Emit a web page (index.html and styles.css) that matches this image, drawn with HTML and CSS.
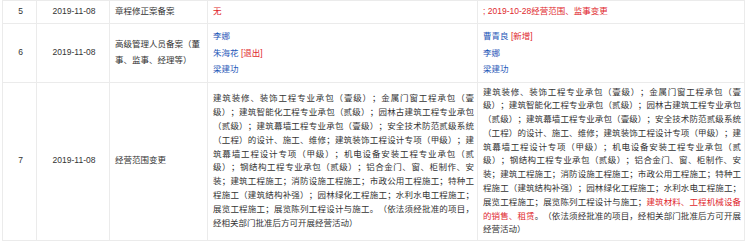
FILE: index.html
```html
<!DOCTYPE html>
<html lang="zh-CN">
<head>
<meta charset="utf-8">
<title>变更记录</title>
<link rel="stylesheet" href="styles.css">
</head>
<body>
<table class="changes">
  <colgroup>
    <col class="c-no">
    <col class="c-date">
    <col class="c-type">
    <col class="c-before">
    <col class="c-after">
  </colgroup>
  <tbody>
    <tr class="row-short">
      <td class="center">5</td>
      <td class="center">2019-11-08</td>
      <td>章程修正案备案</td>
      <td><span class="red">无</span></td>
      <td><span class="red">; 2019-10-28经营范围、监事变更</span></td>
    </tr>
    <tr class="row-people">
      <td class="center">6</td>
      <td class="center">2019-11-08</td>
      <td class="type-wrap">高级管理人员备案（董事、监事、经理等）</td>
      <td>
        <div class="person"><a class="name">李娜</a></div>
        <div class="person"><a class="name">朱海花</a> <span class="red">[退出]</span></div>
        <div class="person"><a class="name">梁建功</a></div>
      </td>
      <td>
        <div class="person"><a class="name">曹青良</a> <span class="red">[新增]</span></div>
        <div class="person"><a class="name">李娜</a></div>
        <div class="person"><a class="name">梁建功</a></div>
      </td>
    </tr>
    <tr class="row-long">
      <td class="center">7</td>
      <td class="center">2019-11-08</td>
      <td>经营范围变更</td>
      <td class="scope">建筑装修、装饰工程专业承包（壹级）；金属门窗工程承包（壹级）；建筑智能化工程专业承包（贰级）；园林古建筑工程专业承包（贰级）；建筑幕墙工程专业承包（壹级）；安全技术防范贰级系统（工程）的设计、施工、维修；建筑装饰工程设计专项（甲级）；建筑幕墙工程设计专项（甲级）；机电设备安装工程专业承包（贰级）；钢结构工程专业承包（贰级）；铝合金门、窗、柜制作、安装；建筑工程施工；消防设施工程施工；市政公用工程施工；特种工程施工（建筑结构补强）；园林绿化工程施工；水利水电工程施工；展览工程施工；展览陈列工程设计与施工。（依法须经批准的项目，经相关部门批准后方可开展经营活动）</td>
      <td class="scope">建筑装修、装饰工程专业承包（壹级）；金属门窗工程承包（壹级）；建筑智能化工程专业承包（贰级）；园林古建筑工程专业承包（贰级）；建筑幕墙工程专业承包（壹级）；安全技术防范贰级系统（工程）的设计、施工、维修；建筑装饰工程设计专项（甲级）；建筑幕墙工程设计专项（甲级）；机电设备安装工程专业承包（贰级）；钢结构工程专业承包（贰级）；铝合金门、窗、柜制作、安装；建筑工程施工；消防设施工程施工；市政公用工程施工；特种工程施工（建筑结构补强）；园林绿化工程施工；水利水电工程施工；展览工程施工；展览陈列工程设计与施工；<span class="red">建筑材料、工程机械设备的销售、租赁</span>。（依法须经批准的项目，经相关部门批准后方可开展经营活动）</td>
    </tr>
  </tbody>
</table>
</body>
</html>
```
FILE: styles.css
```css
html, body {
  margin: 0;
  padding: 0;
  background: #fff;
}

body {
  font-family: "Liberation Sans", "Noto Sans CJK SC", sans-serif;
  font-size: 8.5px;
  color: #333;
  text-spacing-trim: space-all;
}

.changes {
  margin-left: 2px;
  width: 742px;
  table-layout: fixed;
  border-collapse: collapse;
  border: 1px solid #ebebeb;
}

.c-no { width: 34px; }
.c-date { width: 73px; }
.c-type { width: 98px; }
.c-before { width: 270px; }
.c-after { width: 267px; }

.changes td {
  border: 1px solid #ebebeb;
  padding: 3px 3px 3px 5px;
  vertical-align: middle;
  line-height: 13.8px;
  text-align: left;
  word-break: break-all;
}

.changes td.center {
  text-align: center;
}

.row-short td {
  height: 16px;
}

.row-people td {
  padding-top: 4px;
  padding-bottom: 4px;
}

.type-wrap {
  line-height: 15.3px !important;
}

.person {
  line-height: 16.5px;
}

.name {
  color: #1f58b8;
  text-decoration: none;
}

.red {
  color: #e0282e;
}

.scope {
  text-align: justify !important;
}
```
